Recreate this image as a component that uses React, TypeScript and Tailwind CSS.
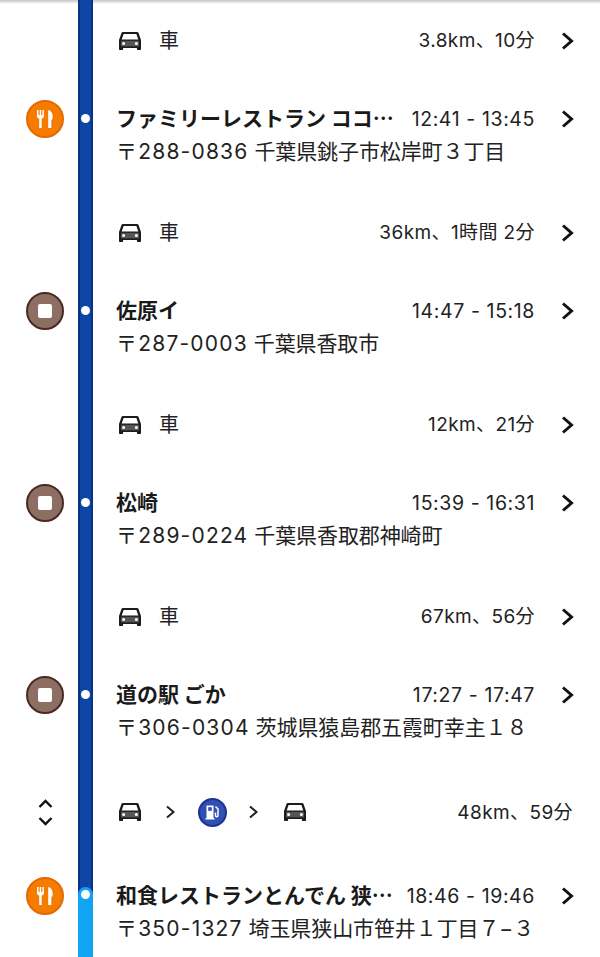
import React from 'react';

const CarIcon = () => (
  <svg width="24" height="20" viewBox="0 0 24 20" className="shrink-0">
    <path d="M5.200 1h13.600c.9 0 1.600.5 1.900 1.400L23 9v9.200c0 .5-.4.8-.8.8h-2.500c-.5 0-.8-.3-.8-.8V17H5.100v1.200c0 .5-.3.8-.8.8H1.800c-.4 0-.8-.3-.8-.8V9l2.300-6.600C3.600 1.500 4.300 1 5.200 1z" fill="#1c1c1e" />
    <path d="M5.600 3h12.800l1.900 5.600H3.700z" fill="#fff" />
    <rect x="3" y="9.800" width="18" height="5.600" fill="#55565a" />
    <circle cx="5.600" cy="12.400" r="1.500" fill="#fff" />
    <circle cx="18.400" cy="12.400" r="1.500" fill="#fff" />
  </svg>
);

const Chevron = ({ size = 'big' }: { size?: 'big' | 'small' }) =>
  size === 'big' ? (
    <svg width="14" height="18" viewBox="0 0 14 18" className="shrink-0">
      <path d="M3 1.500l8.500 7.500L3 16.500" fill="none" stroke="#111" strokeWidth="3" />
    </svg>
  ) : (
    <svg width="11" height="14" viewBox="0 0 11 14" className="shrink-0">
      <path d="M2 1.500L8.500 7 2 12.500" fill="none" stroke="#222" strokeWidth="2" />
    </svg>
  );

const FoodBadge = () => (
  <div className="w-[38px] h-[38px] rounded-full bg-[#f57c00] border-2 border-[#e26a00] flex items-center justify-center">
    <svg width="18" height="20" viewBox="0 0 18 20">
      <path d="M1 1h1.500v5h1.200V1h1.500v5h1.200V1h1.500v6.200c0 1.300-.9 2.200-2.200 2.400V19H3.200V9.600C1.900 9.400 1 8.500 1 7.200z" fill="#fff" />
      <path d="M12.200 19V1c2.800.6 4.500 3.200 4.500 6.600 0 1.800-.4 3.200-1.400 4V19z" fill="#fff" />
    </svg>
  </div>
);

const StopBadge = () => (
  <div className="w-[38px] h-[38px] rounded-full bg-[#8d6e63] border-2 border-[#4a2a20] flex items-center justify-center">
    <div className="w-[14px] h-[14px] bg-white rounded-[2px]" />
  </div>
);

const GasBadge = () => (
  <div className="w-[29px] h-[29px] rounded-full bg-[#3050b4] border-2 border-[#1c3490] flex items-center justify-center shrink-0">
    <svg width="17" height="17" viewBox="0 0 17 17">
      <path d="M2.500 1.500h7v12.500h1V15.500H1.500V14h1z" fill="#fff" />
      <rect x="4.200" y="3.200" width="3.600" height="3.600" fill="#3050b4" />
      <path d="M11.500 2.500l2.500 2.500v6.500c0 .8-.5 1.300-1.200 1.300s-1.300-.5-1.300-1.300V8.500" fill="none" stroke="#fff" strokeWidth="1.500" />
    </svg>
  </div>
);

const Rail = ({ dot, light }: { dot?: boolean; light?: boolean }) => (
  <div className="relative w-[15px] shrink-0 self-stretch bg-[#0d46a4] border-x-2 border-[#0a3280]">
    {light && <div className="absolute inset-x-[-2px] top-[39px] bottom-0 bg-[#10a4f3]" />}
    {dot && (
      <div
        className={
          light
            ? 'absolute left-[-2px] top-[31px] w-[15px] h-[15px] rounded-full bg-[#10a4f3] flex items-center justify-center'
            : 'absolute left-[-2px] top-[31px] w-[15px] h-[15px] flex items-center justify-center'
        }
      >
        <div className="w-[9px] h-[9px] rounded-full bg-white" />
      </div>
    )}
  </div>
);

const DriveRow = ({ distance }: { distance: string }) => (
  <div className="flex h-[80px]">
    <div className="w-[78px] shrink-0" />
    <Rail />
    <div className="flex-1 flex items-center pl-[25px] pr-[26px] pt-[1px]">
      <CarIcon />
      <span className="ml-[17px] text-[20px] text-[#222]">車</span>
      <span className="ml-auto text-[19px] tracking-[0.4px] text-[#222] pt-[2px]">{distance}</span>
      <div className="ml-[25px]">
        <Chevron />
      </div>
    </div>
  </div>
);

const StopRow = ({
  name,
  time,
  postal,
  address,
  badge,
  last,
}: {
  name: string;
  time: string;
  postal: string;
  address: string;
  badge: React.ReactNode;
  last?: boolean;
}) => (
  <div className={last ? 'flex h-[101px]' : 'flex h-[112px]'}>
    <div className={last ? 'w-[78px] shrink-0 pl-[26px] pt-[21px]' : 'w-[78px] shrink-0 pl-[26px] pt-[20px]'}>{badge}</div>
    <Rail dot light={last} />
    <div className={last ? 'flex-1 min-w-0 pl-[23px] pr-[26px] pt-[24px]' : 'flex-1 min-w-0 pl-[23px] pr-[26px] pt-[23px]'}>
      <div className="flex items-center h-[32px]">
        <span className="pb-[3px] text-[21px] font-bold text-[#1a1a1a] whitespace-nowrap font-['Noto_Sans_CJK_JP',sans-serif]">{name}</span>
        <span className="ml-auto text-[19.5px] tracking-[0.6px] text-[#222] whitespace-nowrap pt-[1px]">{time}</span>
        <div className="ml-[25px]">
          <Chevron />
        </div>
      </div>
      <div className="h-[32px] pt-[1px] leading-[32px] text-[21px] text-[#222] whitespace-nowrap">
        <span className="tracking-[1.2px]">{postal}</span> <span className="tracking-[-0.1px]">{address}</span>
      </div>
    </div>
  </div>
);

export default function App() {
  return (
    <div className="relative w-[600px] h-[957px] overflow-hidden bg-white font-['Inter','Noto_Sans_CJK_JP',sans-serif]">
      <div className="absolute inset-x-0 top-0 h-[4px] bg-gradient-to-b from-[#c4c4c4] to-white" />
      <div className="relative">
        <DriveRow distance="3.8km、10分" />
        <StopRow
          badge={<FoodBadge />}
          name="ファミリーレストラン ココ…"
          time="12:41 - 13:45"
          postal="〒288-0836"
          address="千葉県銚子市松岸町３丁目"
        />
        <DriveRow distance="36km、1時間 2分" />
        <StopRow badge={<StopBadge />} name="佐原イ" time="14:47 - 15:18" postal="〒287-0003" address="千葉県香取市" />
        <DriveRow distance="12km、21分" />
        <StopRow badge={<StopBadge />} name="松崎" time="15:39 - 16:31" postal="〒289-0224" address="千葉県香取郡神崎町" />
        <DriveRow distance="67km、56分" />
        <StopRow badge={<StopBadge />} name="道の駅 ごか" time="17:27 - 17:47" postal="〒306-0304" address="茨城県猿島郡五霞町幸主１８" />

        {/* collapsed steps */}
        <div className="flex h-[88px]">
          <div className="w-[78px] shrink-0 flex flex-col items-center justify-center gap-[9px] pl-[12px]">
            <svg width="15" height="9" viewBox="0 0 15 9">
              <path d="M1.500 8L7.500 2l6 6" fill="none" stroke="#111" strokeWidth="2.400" />
            </svg>
            <svg width="15" height="9" viewBox="0 0 15 9">
              <path d="M1.500 1l6 6 6-6" fill="none" stroke="#111" strokeWidth="2.400" />
            </svg>
          </div>
          <Rail />
          <div className="flex-1 flex items-center pl-[25px] pr-[27px]">
            <CarIcon />
            <div className="ml-[23px]">
              <Chevron size="small" />
            </div>
            <div className="ml-[22px]">
              <GasBadge />
            </div>
            <div className="ml-[21px]">
              <Chevron size="small" />
            </div>
            <div className="ml-[24px]">
              <CarIcon />
            </div>
            <span className="ml-auto text-[19px] tracking-[0.4px] text-[#222] pt-[2px]">48km、59分</span>
          </div>
        </div>

        <StopRow
          last
          badge={<FoodBadge />}
          name="和食レストランとんでん 狭…"
          time="18:46 - 19:46"
          postal="〒350-1327"
          address="埼玉県狭山市笹井１丁目７−３"
        />
      </div>
    </div>
  );
}
